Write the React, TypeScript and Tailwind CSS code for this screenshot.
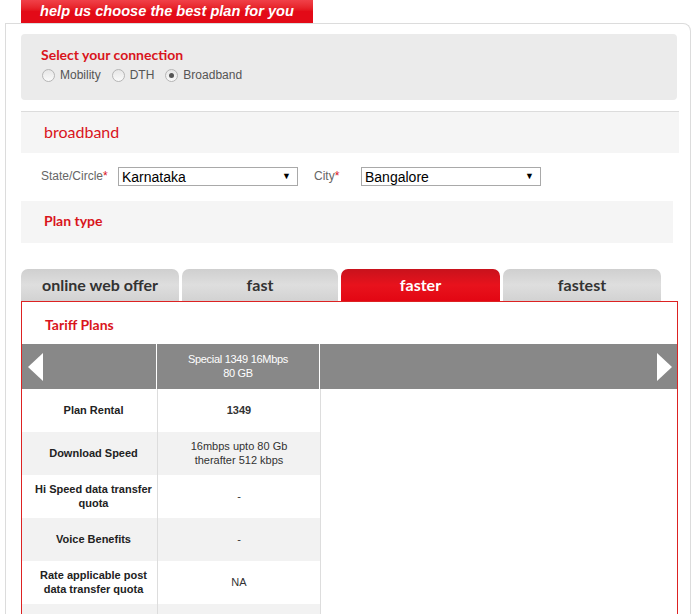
import React from 'react';

const rows = [
  { label: 'Plan Rental', value: '1349', bold: true },
  { label: 'Download Speed', value: '16mbps upto 80 Gb\ntherafter 512 kbps' },
  { label: 'Hi Speed data transfer\nquota', value: '-' },
  { label: 'Voice Benefits', value: '-' },
  { label: 'Rate applicable post\ndata transfer quota', value: 'NA' },
  { label: '', value: '' },
];

const tabs = [
  { name: 'online web offer', w: 'w-[158px]' },
  { name: 'fast', w: 'w-[156px]' },
  { name: 'faster', w: 'w-[159px]' },
  { name: 'fastest', w: 'w-[158px]' },
];

const Radio = ({ checked, label }: { checked?: boolean; label: string }) => (
  <label className="flex items-center gap-[5px] mr-[11px]">
    <span className="w-[13px] h-[13px] rounded-full border border-[#b5b5b5] bg-gradient-to-b from-[#e6e6e6] to-[#fafafa] flex items-center justify-center">
      {checked && <span className="w-[5px] h-[5px] rounded-full bg-[#555]" />}
    </span>
    <span>{label}</span>
  </label>
);

const FakeSelect = ({ value }: { value: string }) => (
  <div className="w-[180px] h-[19px] border border-[#a9a9a9] bg-white flex items-center justify-between pl-[3px] pr-[6px] text-[14px] leading-none text-black">
    <span>{value}</span>
    <span className="text-[9px]">▼</span>
  </div>
);

const Arrow = ({ dir }: { dir: 'left' | 'right' }) => (
  <svg width="15" height="28" viewBox="0 0 15 28">
    {dir === 'left' ? <polygon points="15,0 15,28 0,14" fill="#fff" /> : <polygon points="0,0 0,28 15,14" fill="#fff" />}
  </svg>
);

export default function App() {
  return (
    <div className="w-[693px] h-[614px] overflow-hidden bg-white font-['Liberation_Sans',Arial,sans-serif]">
      {/* banner */}
      <div className="ml-[21px] w-[292px] h-[23px] bg-gradient-to-b from-[#f04048] via-[#e30a17] to-[#e30a17] flex items-center justify-center text-white italic font-bold text-[14.6px] leading-none">
        help us choose the best plan for you
      </div>

      <div className="ml-[5px] w-[686px] h-[600px] border-l border-t border-r border-[#dcdcdc] rounded-tr-[8px] pl-[15px] pt-[10px]">
        {/* connection */}
        <div className="w-[656px] h-[66px] bg-[#ebebeb] rounded-[4px] pl-[20px] pt-[13px]">
          <div className="font-['Lato',sans-serif] font-bold text-[14px] leading-[16px] text-[#d9141c]">Select your connection</div>
          <div className="flex items-center mt-[3px] text-[12px] text-[#555] pl-[1px]">
            <Radio label="Mobility" />
            <Radio label="DTH" />
            <Radio label="Broadband" checked />
          </div>
        </div>

        {/* broadband */}
        <div className="mt-[11px] w-[658px] h-[42px] bg-[#f5f5f5] border-t border-[#dcdcdc] flex items-center pl-[23px] pb-[2px]">
          <span className="font-['Lato',sans-serif] text-[16px] text-[#d9141c]">broadband</span>
        </div>

        <div className="mt-[14px] flex items-start pl-[20px] text-[12px] text-[#666]">
          <span className="w-[77px]">State/Circle<span className="text-[#d9141c]">*</span></span>
          <FakeSelect value="Karnataka" />
          <span className="ml-[16px] w-[47px]">City<span className="text-[#d9141c]">*</span></span>
          <FakeSelect value="Bangalore" />
        </div>

        {/* plan type */}
        <div className="mt-[15px] w-[652px] h-[42px] bg-[#f5f5f5] flex items-center pl-[23px] pb-[4px]">
          <span className="font-['Lato',sans-serif] font-bold text-[14px] text-[#d9141c]">Plan type</span>
        </div>

        {/* tabs */}
        <div className="mt-[26px] flex gap-[3px]">
          {tabs.map((t) => {
            const active = t.name === 'faster';
            return (
              <div
                key={t.name}
                className={
                  t.w +
                  (active
                    ? ' h-[32px] rounded-t-[7px] bg-gradient-to-b from-[#c8121c] via-[#e8121c] to-[#e30613] flex items-center justify-center pb-[1px] font-["Lato",sans-serif] font-bold text-[16px] text-white'
                    : ' h-[32px] rounded-t-[7px] bg-gradient-to-b from-[#cfcfcf] via-[#dedede] to-[#d2d2d2] flex items-center justify-center pb-[1px] font-["Lato",sans-serif] font-bold text-[16px] text-[#333]')
                }
              >
                {t.name}
              </div>
            );
          })}
        </div>

        {/* tariff panel */}
        <div className="w-[657px] h-[320px] border border-[#d22] border-b-0">
          <div className="h-[42px] flex items-center pl-[23px] pt-[3px]">
            <span className="font-['Lato',sans-serif] font-bold text-[14px] text-[#d9141c]">Tariff Plans</span>
          </div>
          <div className="h-[45px] bg-[#888] flex text-white text-[11px] leading-[14px]">
            <div className="w-[135px] flex items-center pl-[6px] border-r border-white">
              <Arrow dir="left" />
            </div>
            <div className="w-[163px] flex items-start justify-center text-center pt-[8px] border-r border-white tracking-[-0.3px]">
              Special 1349 16Mbps<br />80 GB
            </div>
            <div className="flex-1 flex items-center justify-end pr-[5px]">
              <Arrow dir="right" />
            </div>
          </div>
          <div className="flex flex-col">
            {rows.map((r, i) => (
              <div key={i} className={'flex h-[43px] w-[299px] ' + (i % 2 === 1 ? 'bg-[#f2f2f2]' : 'bg-white')}>
                <div className="w-[135px] flex items-center justify-center text-center font-bold text-[11px] leading-[14px] text-[#222] whitespace-pre-line pl-[8px] pb-[2px]">
                  {r.label}
                </div>
                <div
                  className={
                    'w-[164px] flex justify-center text-center text-[11px] leading-[14px] text-[#333] whitespace-pre-line border-l border-r border-[#ddd] ' +
                    (r.bold ? 'font-bold pt-[14px] items-start' : 'items-center pb-[2px]')
                  }
                >
                  {r.value}
                </div>
              </div>
            ))}
          </div>
        </div>
      </div>
    </div>
  );
}
